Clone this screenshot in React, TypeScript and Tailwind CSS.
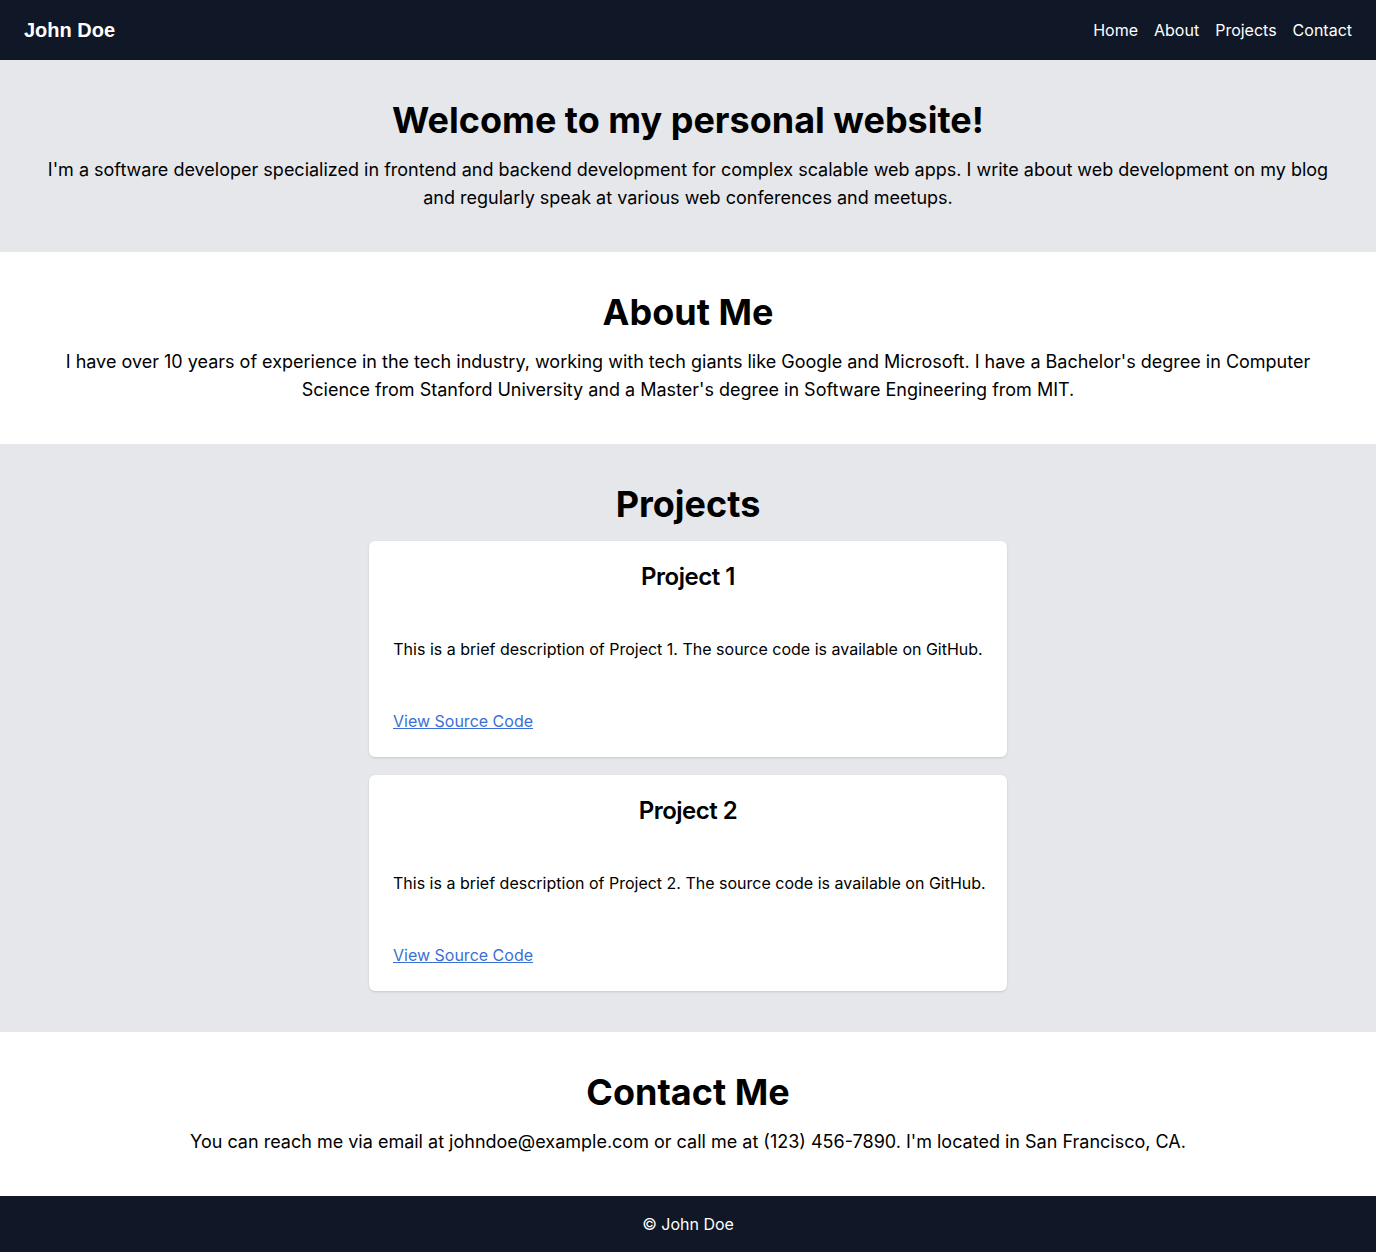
import React from 'react';

const projects = [
  { id: 1, title: 'Project 1', description: 'This is a brief description of Project 1. The source code is available on GitHub.' },
  { id: 2, title: 'Project 2', description: 'This is a brief description of Project 2. The source code is available on GitHub.' },
];

const App: React.FC = () => {
  return (
    <div className="min-h-screen bg-white text-black font-['Inter',sans-serif]">
      {/* Navbar */}
      <nav className="bg-gray-900 text-white px-6 py-4 flex items-center justify-between">
        <span className="text-xl font-bold font-['Liberation_Sans',Arial,sans-serif]">John Doe</span>
        <ul className="flex gap-4 text-base">
          <li><a href="#home">Home</a></li>
          <li><a href="#about">About</a></li>
          <li><a href="#projects">Projects</a></li>
          <li><a href="#contact">Contact</a></li>
        </ul>
      </nav>

      {/* Hero */}
      <section id="home" className="bg-gray-200 py-10 px-8 text-center">
        <h1 className="text-4xl font-bold mb-4">Welcome to my personal website!</h1>
        <p className="text-lg">
          I'm a software developer specialized in frontend and backend development for complex scalable web apps. I write about web development on my blog and regularly speak at various web conferences and meetups.
        </p>
      </section>

      {/* About */}
      <section id="about" className="py-10 px-8 text-center">
        <h2 className="text-4xl font-bold mb-4">About Me</h2>
        <p className="text-lg">
          I have over 10 years of experience in the tech industry, working with tech giants like Google and Microsoft. I have a Bachelor's degree in Computer Science from Stanford University and a Master's degree in Software Engineering from MIT.
        </p>
      </section>

      {/* Projects */}
      <section id="projects" className="bg-gray-200 pt-10 pb-[41px] px-8">
        <h2 className="text-4xl font-bold mb-[17px] text-center">Projects</h2>
        <div className="flex flex-col items-center gap-[18px]">
          {projects.map((p) => (
            <div key={p.id} className="w-[638px] bg-white rounded-md shadow px-6 pt-5 pb-6">
              <h3 className="text-2xl font-semibold tracking-[-0.02em] text-center mb-11">{p.title}</h3>
              <p className="text-base text-center whitespace-nowrap">{p.description}</p>
              <a href="#" className="block mt-12 text-[#3b6fd6] underline w-fit">View Source Code</a>
            </div>
          ))}
        </div>
      </section>

      {/* Contact */}
      <section id="contact" className="py-10 px-8 text-center">
        <h2 className="text-4xl font-bold mb-4">Contact Me</h2>
        <p className="text-lg">
          You can reach me via email at johndoe@example.com or call me at (123) 456-7890. I'm located in San Francisco, CA.
        </p>
      </section>

      {/* Footer */}
      <footer className="bg-gray-900 text-white py-4 text-center">
        &copy; John Doe
      </footer>
    </div>
  );
};

export default App;
